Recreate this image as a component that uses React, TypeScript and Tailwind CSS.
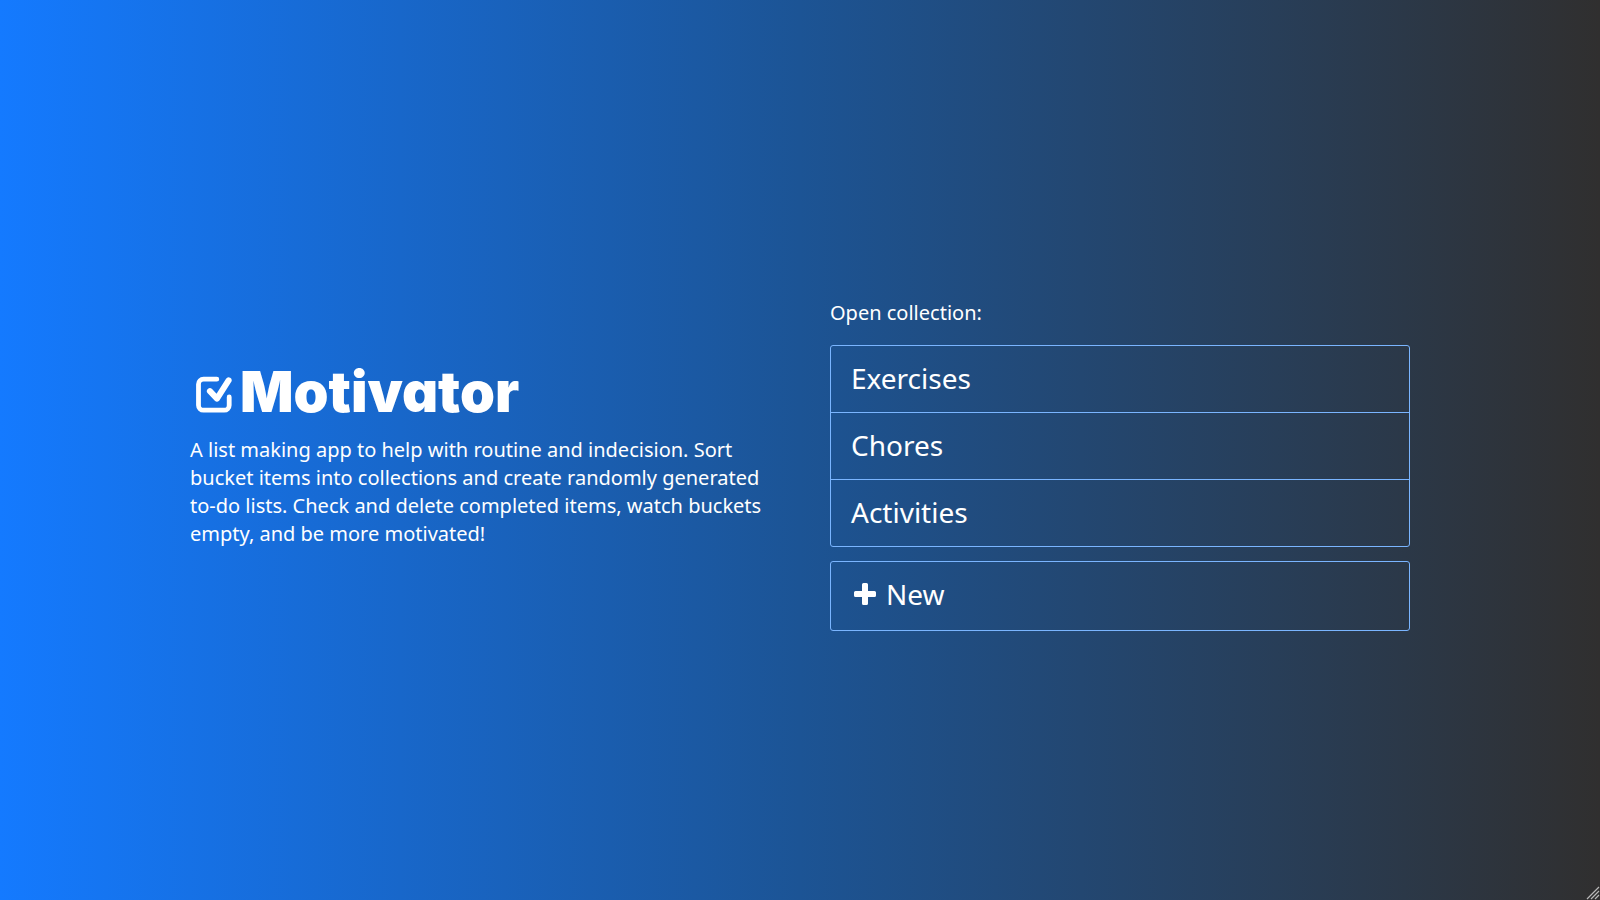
const collections = ["Exercises", "Chores", "Activities"];

function CheckLogo() {
  return (
    <svg viewBox="0 0 36 38" fill="none" stroke="currentColor" strokeLinecap="round" strokeLinejoin="round" className="mb-1.5 h-[38px] w-9 shrink-0" aria-hidden="true">
      <path d="M20.8 3.2H7.5a5 5 0 0 0-5 5v21a5 5 0 0 0 5 5h20.7a5 5 0 0 0 5-5V21" strokeWidth="4.8" />
      <path d="M13.9 15.2 21 22.6 32.6 4.4" strokeWidth="6" />
    </svg>
  );
}

export default function App() {
  return (
    <div className="relative flex min-h-screen items-center justify-center bg-linear-to-r/srgb from-[#147aff] via-[#1c5495] to-[#302f2f] px-6 pt-[30px] font-['Noto_Sans',sans-serif] text-xl leading-7 text-white">
      <main className="grid w-full max-w-[1220px] items-center gap-[60px] md:grid-cols-2">
        <section className="pb-[18px]">
          <h1 className="mb-4 flex items-end gap-2 pl-1.5 font-['Inter',sans-serif] text-[56px] leading-[56px] font-black">
            <CheckLogo />
            <span className="[font-feature-settings:'cv11']">Motivator</span>
          </h1>
          <p>
            A list making app to help with routine and indecision. Sort bucket items into collections and create randomly
            generated to-do lists. Check and delete completed items, watch buckets empty, and be more motivated!
          </p>
        </section>
        <nav aria-labelledby="open-label">
          <h2 id="open-label" className="mb-[18px]">Open collection:</h2>
          <ul className="mb-3.5 divide-y divide-[#7ab5ff] rounded-[3px] border border-[#7ab5ff]">
            {collections.map((name) => (
              <li key={name}>
                <button type="button" className="w-full px-5 pt-3 pb-3.5 text-left text-[28px] leading-10">{name}</button>
              </li>
            ))}
          </ul>
          <button type="button" className="flex w-full items-center gap-2.5 rounded-[3px] border border-[#7ab5ff] px-[23px] pt-3 pb-4 text-left text-[28px] leading-10">
            <svg viewBox="0 0 22 22" fill="currentColor" className="size-[22px]" aria-hidden="true">
              <path d="M9.5 0h3q1.500 0 1.500 1.500V8h6.500Q22 8 22 9.500v3q0 1.500-1.500 1.500H14v6.500q0 1.500-1.500 1.500h-3Q8 22 8 20.500V14H1.500Q0 14 0 12.500v-3Q0 8 1.500 8H8V1.500Q8 0 9.500 0Z" />
            </svg>
            New
          </button>
        </nav>
      </main>
      <svg viewBox="0 0 14 14" className="absolute right-0 bottom-0 size-3.5" stroke="#b8b8b8" strokeWidth="1.2" aria-hidden="true">
        <path d="M1 13 13 1M5 13l8-8M9 13l4-4" />
      </svg>
    </div>
  );
}
